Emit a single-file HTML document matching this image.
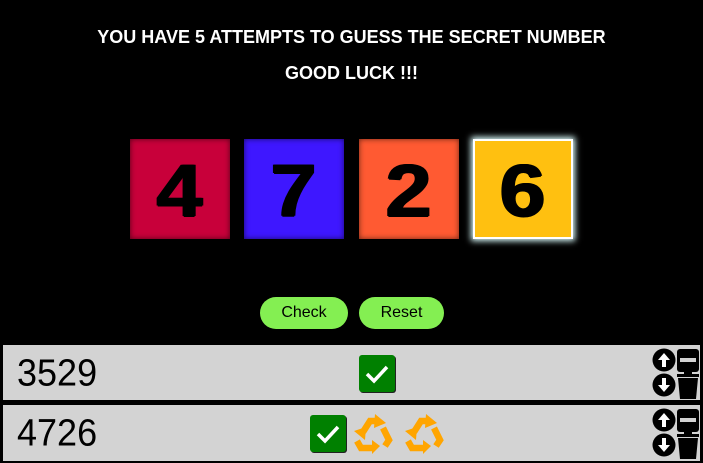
<!DOCTYPE html>
<html><head><meta charset="utf-8"><style>
*{margin:0;padding:0;box-sizing:border-box}
body{width:703px;height:463px;background:#000;position:relative;overflow:hidden;font-family:"Liberation Sans",sans-serif}
.h{position:absolute;left:0;width:703px;text-align:center;color:#fff;font-weight:bold;font-size:18px;line-height:20px}
.box{position:absolute;top:139px;width:100px;height:100px;font-weight:bold;font-size:74px;line-height:104px;text-align:center;color:#000}
.box span{display:inline-block;transform:scaleX(1.12);text-shadow:1px 0 0 #000,-1px 0 0 #000,0 1px 0 #000}
.btn{position:absolute;top:297px;height:32px;background:#84ef52;border-radius:16px;font-size:16px;line-height:32px;text-align:center;color:#000}
.row{position:absolute;left:3px;width:697px;background:#d3d3d3}
.num{position:absolute;left:14px;font-size:36px;color:#000;transform:scaleY(1.05)}
.ck{position:absolute;width:36px;height:37px;background:#008000;border-radius:3px;box-shadow:1px 1px 0 #222}
.ic{position:absolute}
</style></head><body>
<div class="h" style="top:27px">YOU HAVE 5 ATTEMPTS TO GUESS THE SECRET NUMBER</div>
<div class="h" style="top:63px">GOOD LUCK !!!</div>
<div class="box" style="left:130px;background:#c8003a;box-shadow:inset 0 0 6px rgba(0,0,0,.6)"><span>4</span></div>
<div class="box" style="left:244px;background:#3e17ff;box-shadow:inset 0 0 6px rgba(0,0,0,.6)"><span>7</span></div>
<div class="box" style="left:359px;background:#ff5a32;box-shadow:inset 0 0 6px rgba(0,0,0,.6)"><span>2</span></div>
<div class="box" style="left:473px;background:#ffc010;border:2px solid #fff;box-shadow:0 0 6px 2px #dff;line-height:100px"><span>6</span></div>
<div class="btn" style="left:260px;width:88px">Check</div>
<div class="btn" style="left:359px;width:85px">Reset</div>
<div class="row" style="top:345px;height:55px"><div class="num" style="top:7px">3529</div></div>
<div class="row" style="top:405px;height:56px"><div class="num" style="top:7px">4726</div></div>
<div class="ck" style="left:359px;top:355px"><svg width="36" height="37"><path d="M8 19 L15 26 L28 12" stroke="#fff" stroke-width="3.5" fill="none"/></svg></div>
<div class="ck" style="left:310px;top:415px"><svg width="36" height="37"><path d="M8 19 L15 26 L28 12" stroke="#fff" stroke-width="3.5" fill="none"/></svg></div>
<svg class="ic" style="left:352px;top:413px" width="42" height="42" viewBox="0 0 42 42"><g fill="none" stroke="#ffa500" stroke-width="6.5"><path d="M11 19 L18 8 L25 8"/><path d="M31 15 L37 27 L33 33"/><path d="M22 35 L9 35 L5 28"/></g><g fill="#ffa500"><path d="M23 1 L34 10 L22 15Z"/><path d="M20 27 L28 33 L20 41Z"/><path d="M2 18 L14 14 L13 27Z"/></g></svg>
<svg class="ic" style="left:403px;top:413px" width="42" height="42" viewBox="0 0 42 42"><g fill="none" stroke="#ffa500" stroke-width="6.5"><path d="M11 19 L18 8 L25 8"/><path d="M31 15 L37 27 L33 33"/><path d="M22 35 L9 35 L5 28"/></g><g fill="#ffa500"><path d="M23 1 L34 10 L22 15Z"/><path d="M20 27 L28 33 L20 41Z"/><path d="M2 18 L14 14 L13 27Z"/></g></svg>
<svg class="ic" style="left:651px;top:348px" width="50" height="52" viewBox="0 0 50 52"><circle cx="13" cy="12" r="11.5"/><path d="M13 5 L7 12 H11 V19 H15 V12 H19Z" fill="#fff"/><circle cx="13" cy="37" r="11.5"/><path d="M13 44 L7 37 H11 V30 H15 V37 H19Z" fill="#fff"/><rect x="26" y="1" width="22" height="23" rx="3"/><rect x="29" y="10" width="16" height="4" fill="#d3d3d3"/><rect x="26" y="26" width="22" height="3"/><rect x="33" y="24" width="8" height="3"/><path d="M27 30 H47 L45 51 H29Z"/></svg>
<svg class="ic" style="left:651px;top:408px" width="50" height="52" viewBox="0 0 50 52"><circle cx="13" cy="12" r="11.5"/><path d="M13 5 L7 12 H11 V19 H15 V12 H19Z" fill="#fff"/><circle cx="13" cy="37" r="11.5"/><path d="M13 44 L7 37 H11 V30 H15 V37 H19Z" fill="#fff"/><rect x="26" y="1" width="22" height="23" rx="3"/><rect x="29" y="10" width="16" height="4" fill="#d3d3d3"/><rect x="26" y="26" width="22" height="3"/><rect x="33" y="24" width="8" height="3"/><path d="M27 30 H47 L45 51 H29Z"/></svg>
</body></html>
